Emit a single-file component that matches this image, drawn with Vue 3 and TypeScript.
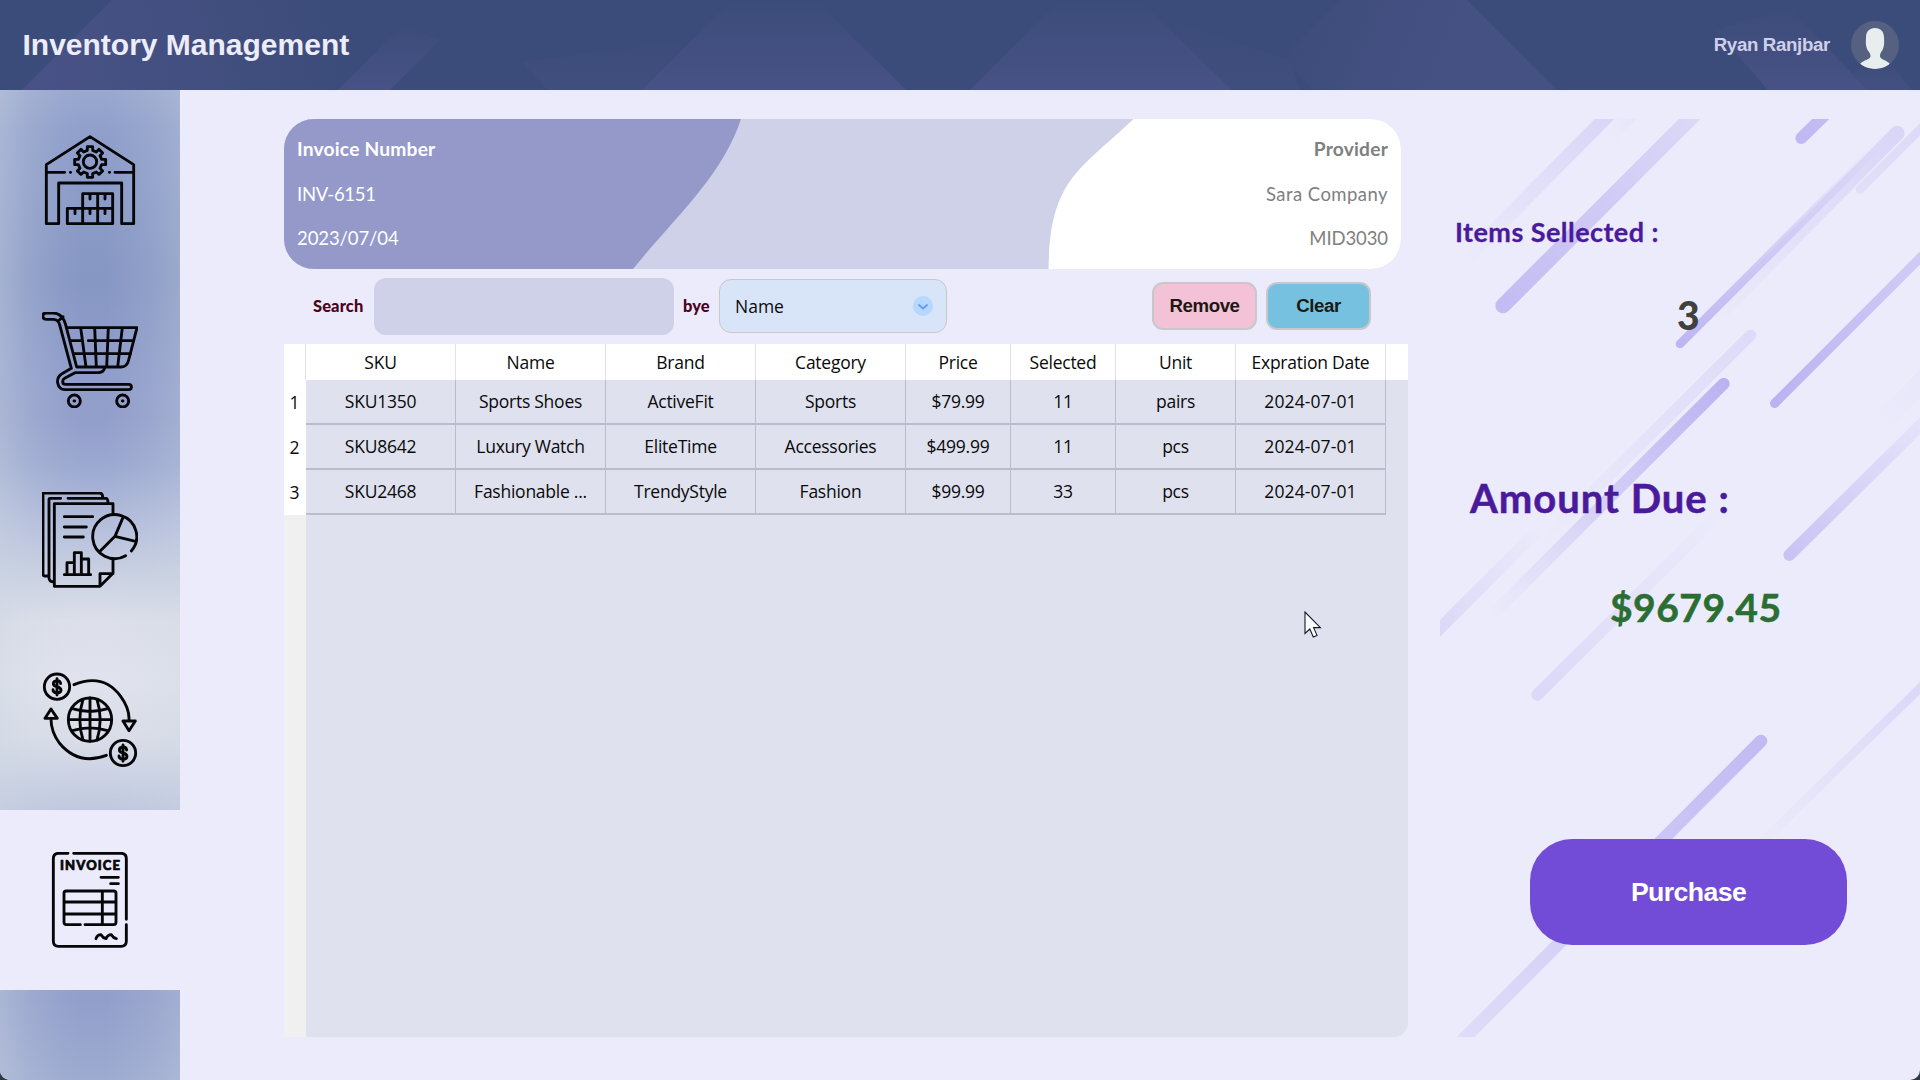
<script setup lang="ts">
interface Item {
  sku: string
  name: string
  maker: string
  category: string
  price: string
  selected: number
  unit: string
  expires: string
}

interface Streak {
  x1: number
  y1: number
  x2: number
  y2: number
  width: number
  from: number
  to: number
  cap: 'round' | 'butt'
}

const headings: string[] = ['SKU', 'Name', 'Brand', 'Category', 'Price', 'Selected', 'Unit', 'Expration Date']

const items: Item[] = [
  { sku: 'SKU1350', name: 'Sports Shoes', maker: 'ActiveFit', category: 'Sports', price: '$79.99', selected: 11, unit: 'pairs', expires: '2024-07-01' },
  { sku: 'SKU8642', name: 'Luxury Watch', maker: 'EliteTime', category: 'Accessories', price: '$499.99', selected: 11, unit: 'pcs', expires: '2024-07-01' },
  { sku: 'SKU2468', name: 'Fashionable ...', maker: 'TrendyStyle', category: 'Fashion', price: '$99.99', selected: 33, unit: 'pcs', expires: '2024-07-01' },
]

// Decorative diagonal streaks; from/to are the opacities at each end.
const streaks: Streak[] = [
  { x1: 100, y1: 485, x2: 550, y2: 30, width: 42, from: 0, to: 0.21, cap: 'butt' },
  { x1: 525, y1: 125, x2: 620, y2: 30, width: 40, from: 0, to: 0.05, cap: 'butt' },
  { x1: 219, y1: 617, x2: 810, y2: 26, width: 46, from: 0.44, to: 0.17, cap: 'round' },
  { x1: 1114, y1: 114, x2: 1210, y2: 20, width: 36, from: 0.47, to: 0.42, cap: 'round' },
  { x1: 750, y1: 732, x2: 1345, y2: 137, width: 26, from: 0.5, to: 0, cap: 'round' },
  { x1: 1402, y1: 99, x2: 830, y2: 680, width: 44, from: 0.2, to: 0, cap: 'round' },
  { x1: 1290, y1: 268, x2: 1500, y2: 58, width: 26, from: 0.12, to: 0.16, cap: 'round' },
  { x1: 1034, y1: 910, x2: 1500, y2: 444, width: 28, from: 0.52, to: 0.28, cap: 'round' },
  { x1: 1350, y1: 970, x2: 1500, y2: 822, width: 60, from: 0, to: 0.05, cap: 'butt' },
  { x1: 1078, y1: 1365, x2: 1500, y2: 948, width: 36, from: 0.37, to: 0.06, cap: 'round' },
  { x1: 962, y1: 706, x2: 320, y2: 1343, width: 34, from: 0.15, to: 0, cap: 'round' },
  { x1: 881, y1: 851, x2: 180, y2: 1551, width: 36, from: 0.52, to: 0, cap: 'round' },
  { x1: 322, y1: 1784, x2: 880, y2: 1230, width: 36, from: 0.17, to: 0, cap: 'round' },
  { x1: 0, y1: 1615, x2: 340, y2: 1275, width: 36, from: 0.19, to: 0, cap: 'butt' },
  { x1: 993, y1: 1923, x2: 80, y2: 2838, width: 38, from: 0.45, to: 0.13, cap: 'round' },
  { x1: 1500, y1: 1735, x2: 960, y2: 2262, width: 26, from: 0.19, to: 0, cap: 'butt' },
]
</script>

<template>
  <div class="window">
    <header class="topbar">
      <svg class="facets" viewBox="0 0 1920 90" preserveAspectRatio="none">
        <defs>
          <linearGradient id="facet" x1="0" y1="0" x2="0" y2="1">
            <stop offset="0" stop-color="#5a5a96" stop-opacity="0" />
            <stop offset="0.5" stop-color="#5a5a96" stop-opacity="0.2" />
            <stop offset="1" stop-color="#5a5a96" stop-opacity="0.4" />
          </linearGradient>
          <linearGradient id="facetLeft" x1="60" y1="90" x2="330" y2="10" gradientUnits="userSpaceOnUse">
            <stop offset="0" stop-color="#5a5a96" stop-opacity="0.4" />
            <stop offset="1" stop-color="#5a5a96" stop-opacity="0" />
          </linearGradient>
          <linearGradient id="facetRight" x1="1290" y1="0" x2="1440" y2="60" gradientUnits="userSpaceOnUse">
            <stop offset="0" stop-color="#5a5a96" stop-opacity="0" />
            <stop offset="1" stop-color="#5a5a96" stop-opacity="0.32" />
          </linearGradient>
        </defs>
        <polygon points="22,90 112,0 420,0 340,90" fill="url(#facetLeft)" />
        <polygon points="338,90 402,26 440,40 390,90" fill="url(#facet)" />
        <polygon points="548,90 522,62 690,40 642,90" fill="url(#facet)" opacity="0.4" />
        <polygon points="642,90 732,0 815,0 906,90" fill="url(#facet)" />
        <polygon points="970,90 1060,0 1140,0 1232,90" fill="url(#facet)" />
        <polygon points="1232,90 1160,18 1290,60 1300,90" fill="url(#facet)" opacity="0.3" />
        <polygon points="1312,90 1284,56 1340,0 1467,0 1557,90" fill="url(#facetRight)" />
        <polygon points="1768,90 1716,30 1790,8 1867,90" fill="url(#facet)" />
        <polygon points="1867,90 1853,74 1880,50 1912,90" fill="url(#facet)" opacity="0.6" />
      </svg>
      <h1 class="brand">Inventory Management</h1>
      <div class="account">
        <span class="account-name">Ryan Ranjbar</span>
        <svg class="avatar" viewBox="0 0 48 48">
          <defs><clipPath id="round"><circle cx="24" cy="24" r="24" /></clipPath></defs>
          <circle cx="24" cy="24" r="24" fill="#566080" />
          <path clip-path="url(#round)" fill="#e7eeed" d="M24 7C29.500 7 33 10.500 33 16.500C33.300 21 33.500 25 31.500 29C29.500 31.500 29 33 29 35.500C30 39 35 38.500 39 43C35 47 29 48 24 48C19 48 13 47 9 43C13 38.500 18.500 39 19.500 35.500C19.500 33 18.500 31.500 16.500 29C14.500 25 14.700 21 15 16.500C15 10.500 18.500 7 24 7Z" />
        </svg>
      </div>
    </header>

    <div class="body">
      <nav class="sidebar">
        <a class="nav-item">
          <svg class="icon" viewBox="126 126 288 288">
            <path d="M139 224L270 140L401 224V401H365V279H176V401H139ZM139 247H194M345 247H401M202 401V355H248V311H338V401ZM248 355H338M248 355V401M293 311V401M270 311V327M315 311V327M225 355V371M270 355V371M315 355V371M211 247H212M328 247H329" />
            <circle cx="270" cy="215" r="20" />
            <path d="M262 170H278V181L289 186L297 178L308 189L300 197L305 208H317V224H305L300 235L308 243L297 253L289 246L278 251V262H262V251L251 246L243 253L232 243L240 235L235 224H224V208H235L240 197L232 189L243 178L251 186L262 181Z" />
          </svg>
        </a>
        <a class="nav-item">
          <svg class="icon" viewBox="126 666 288 288">
            <path d="M204 713H411L386 810Q381 831 364 831H230L196 701Q187 669 158 669H139C125 669 125 688 139 688H160Q174 689 178 701L214 835L186 851C164 864 171 899 195 899H386C397 899 397 883 386 883H196C186 883 186 869 194 865L225 848H296Q312 846 314 833M178 690L189 680M211 752H247M265 752H401M220 791H392M242 713L258 831M284 713L289 831M325 713L320 831M367 713L353 831" />
            <circle cx="223" cy="933" r="18" /><circle cx="368" cy="933" r="18" />
            <path d="M222 933H224M367 933H369" />
          </svg>
        </a>
        <a class="nav-item">
          <svg class="icon" viewBox="126 126 288 288">
            <path d="M339 190V161H163V409H300L339 370V326M300 409V371H339M163 395Q147 397 147 383V147Q147 145 150 145H182M204 145H318Q324 146 324 158M147 378H134Q129 378 129 372V129H300Q308 130 308 142M193 200H278M193 231H259M193 261H250M193 374H272M201 374V338H223M223 374V308H244V374M244 327H266V374" />
            <path d="M377 317A66 66 0 1 1 394 303M370 200L345 259L407 274M345 259L300 304" />
          </svg>
        </a>
        <a class="nav-item">
          <svg class="icon" viewBox="126 666 288 288">
            <circle cx="171" cy="710" r="38" /><circle cx="369" cy="909" r="38" /><circle cx="270" cy="809" r="65" />
            <path d="M270 744V874M205 809H335M217 776Q270 793 323 776M217 842Q270 825 323 842M249 748Q230 809 249 870M291 748Q310 809 291 870M222 704Q310 668 362 739Q389 776 387 810M369 813H406L387 842ZM319 916Q235 948 178 879Q153 845 153 807M135 805H172L153 777Z" />
            <path d="M182 701Q181 692 171 692Q160 693 160 701Q160 708 171 710Q183 713 183 721Q182 729 171 729Q159 728 159 719M171 686V735M380 900Q379 891 369 891Q358 892 358 900Q358 907 369 909Q381 912 381 920Q380 928 369 928Q357 927 357 918M369 885V934" />
          </svg>
        </a>
        <a class="nav-item active">
          <svg class="icon" viewBox="126 156 288 288">
            <path d="M204 160H176Q160 160 160 176V423Q160 439 176 439H363Q379 439 379 423V374M379 358V176Q379 160 363 160H221M303 232H355M332 251H355M241 374H199Q192 374 192 367V280Q192 273 199 273H341Q348 273 348 280V367Q348 374 341 374H255M192 306H348M192 342H348M307 273V374M288 416Q292 404 303 404Q309 414 318 416Q323 404 334 404Q340 414 349 416" />
            <text x="180" y="209" textLength="180">INVOICE</text>
          </svg>
        </a>
      </nav>

      <main class="content">
        <section class="invoice">
          <svg class="waves" viewBox="0 0 1117 150">
            <path d="M0 0H457C438 57 394 95 349 150H0Z" fill="#9499ca" />
            <path d="M849.500 0H1117V150H764.500C766 60 795 52 849.500 0Z" fill="#ffffff" />
          </svg>
          <div class="invoice-side">
            <strong>Invoice Number</strong>
            <span class="number">INV-6151</span>
            <span class="date">2023/07/04</span>
          </div>
          <div class="invoice-side provider">
            <strong>Provider</strong>
            <span class="company">Sara Company</span>
            <span class="date">MID3030</span>
          </div>
        </section>

        <div class="toolbar">
          <label class="label search-label">Search</label>
          <input class="search" type="text" />
          <label class="label by-label">bye</label>
          <div class="select">
            <span>Name</span>
            <svg viewBox="0 0 20 20">
              <circle cx="10" cy="10" r="10" fill="#b7d7ff" />
              <path d="M6 9L10 12.500L14 9" fill="none" stroke="#5f9ff0" stroke-width="1.800" stroke-linecap="round" />
            </svg>
          </div>
          <button class="action remove">Remove</button>
          <button class="action clear">Clear</button>
        </div>

        <div class="grid">
          <div class="grid-row grid-head">
            <div class="row-no"></div>
            <div v-for="heading in headings" :key="heading" class="cell">{{ heading }}</div>
          </div>
          <div v-for="(item, i) in items" :key="item.sku" class="grid-row grid-line">
            <div class="row-no">{{ i + 1 }}</div>
            <div v-for="(value, key) in item" :key="key" :class="['cell', 'col-' + key]">{{ value }}</div>
          </div>
          <div class="gutter"></div>
        </div>
      </main>

      <aside class="summary">
        <svg class="streaks" viewBox="30 57 1440 2754">
          <defs>
            <linearGradient v-for="(s, i) in streaks" :id="'streak' + i" :key="i" gradientUnits="userSpaceOnUse" :x1="s.x1" :y1="s.y1" :x2="s.x2" :y2="s.y2">
              <stop offset="0" stop-color="#8d80e8" :stop-opacity="s.from" />
              <stop offset="1" stop-color="#8d80e8" :stop-opacity="s.to" />
            </linearGradient>
          </defs>
          <line v-for="(s, i) in streaks" :key="i" :x1="s.x1" :y1="s.y1" :x2="s.x2" :y2="s.y2" :stroke="'url(#streak' + i + ')'" :stroke-width="s.width" :stroke-linecap="s.cap" />
        </svg>
        <h2 class="items-label">Items Sellected :</h2>
        <p class="items-count">3</p>
        <h2 class="due-label">Amount Due :</h2>
        <p class="due">$9679.45</p>
        <button class="purchase">Purchase</button>
      </aside>
    </div>

    <svg class="pointer" viewBox="0 0 18 28">
      <path d="M1 1V22.500L5.800 18L9.300 26L13 24.400L9.600 16.600H16.400Z" fill="#fff" stroke="#15152a" stroke-width="1.100" />
    </svg>
  </div>
</template>

<style>
body {
  margin: 0;
  background: #2d3a40;
}
</style>

<style scoped>
* {
  box-sizing: border-box;
}
.window {
  position: relative;
  width: 1920px;
  height: 1080px;
  display: flex;
  flex-direction: column;
  overflow: hidden;
  background: #ecebfb;
  border-radius: 0 0 10px 10px;
  font-family: Lato, "Liberation Sans", sans-serif;
}
.topbar {
  position: relative;
  flex: none;
  height: 90px;
  display: flex;
  align-items: center;
  justify-content: space-between;
  padding: 0 21px 0 22px;
  background: #3c4c7a;
  font-family: "Liberation Sans", Arial, sans-serif;
}
.facets {
  position: absolute;
  inset: 0;
  width: 100%;
  height: 100%;
}
.brand {
  position: relative;
  margin: 0;
  padding-left: 0.5px;
  font-size: 30px;
  line-height: 34px;
  color: #edecfa;
}
.account {
  position: relative;
  display: flex;
  align-items: center;
  gap: 21px;
}
.account-name {
  font-size: 18.67px;
  letter-spacing: -0.33px;
  font-weight: bold;
  color: #cfd0ea;
}
.avatar {
  width: 48px;
  height: 48px;
}
.body {
  flex: 1;
  display: flex;
}
.sidebar {
  width: 180px;
  flex: none;
  background:
    linear-gradient(90deg, rgba(205, 214, 226, 0.42), rgba(205, 214, 226, 0.2) 16%, rgba(205, 214, 226, 0.05) 34%, rgba(205, 214, 226, 0) 46%, rgba(205, 214, 226, 0) 60%, rgba(205, 214, 226, 0.12) 82%, rgba(205, 214, 226, 0.28)),
    linear-gradient(180deg, #9aa8ce 0, #909fcb 40px, #8c9cc8 100px, #8797c4 190px, #8f9dca 280px, #939fcb 330px, #9ba8d0 375px, #b3bddb 430px, #c7cfe1 480px, #dcdfe9 530px, #e0e3ed 590px, #d9dde8 650px, #c3cbe0 710px, #939fcb 880px, #929fcb 910px, #9dabd0 990px);
}
.nav-item {
  height: 180px;
  display: flex;
  align-items: center;
  justify-content: center;
}
.nav-item.active {
  background: #ecebfb;
}
.icon {
  width: 96px;
  height: 96px;
  fill: none;
  stroke: #060608;
  stroke-width: 8.6;
  stroke-linecap: round;
  stroke-linejoin: round;
}
.icon text {
  font: 900 39px Lato, "Liberation Sans", sans-serif;
  fill: #060608;
  stroke-width: 2;
}
.content {
  width: 1124px;
  margin: 29px 0 0 104px;
  display: flex;
  flex-direction: column;
}
.invoice {
  position: relative;
  width: 1117px;
  height: 150px;
  display: flex;
  justify-content: space-between;
  padding: 0 13px;
  border-radius: 30px;
  overflow: hidden;
  background: #cfd1e8;
}
.waves {
  position: absolute;
  inset: 0;
  width: 1117px;
  height: 150px;
}
.invoice-side {
  position: relative;
  display: flex;
  flex-direction: column;
  gap: 20.5px;
  padding-top: 18px;
  font-size: 18.5px;
  line-height: 24px;
  color: #fff;
}
.invoice-side strong {
  font-size: 19.2px;
  letter-spacing: 0.2px;
}
.number {
  letter-spacing: -0.3px;
}
.date {
  letter-spacing: -0.1px;
}
.company {
  letter-spacing: 0.45px;
}
.provider {
  align-items: flex-end;
  color: #808080;
}
.toolbar {
  height: 75px;
  display: flex;
  align-items: center;
  padding: 0 0 2px 29px;
}
.label {
  font-size: 16.5px;
  letter-spacing: 0.1px;
  font-weight: 900;
  color: #4b0420;
}
.search-label {
  width: 61px;
}
.search {
  width: 300px;
  height: 57px;
  margin-top: 2px;
  border: 0;
  border-radius: 12px;
  background: #cfd1e8;
}
.by-label {
  width: 45px;
  padding-left: 9px;
}
.select {
  width: 228px;
  height: 54px;
  display: flex;
  align-items: center;
  justify-content: space-between;
  padding: 0 13px 0 15px;
  border: 1px solid #c8c8c8;
  border-radius: 12px;
  background: #d8e5f8;
  font: 17.5px "Open Sans", "Noto Sans", sans-serif;
  color: #0b0b0b;
}
.select svg {
  width: 20px;
  height: 20px;
}
.action {
  width: 105px;
  height: 48px;
  padding: 0;
  border: 2px solid #c8c8cc;
  border-radius: 11px;
  font: bold 18.67px "Liberation Sans", Arial, sans-serif;
  letter-spacing: -0.4px;
  color: #1a1a12;
}
.remove {
  margin: 0 9px 0 205px;
  background: #f4c2d7;
}
.clear {
  background: #76c1df;
}
.grid {
  height: 693px;
  display: flex;
  flex-direction: column;
  overflow: hidden;
  border-radius: 0 0 14px 0;
  background: #dfe1ee;
  font: 17.5px "Open Sans", "Noto Sans", sans-serif;
  letter-spacing: -0.25px;
  color: #0a0a0a;
}
.grid-row {
  display: grid;
  grid-template-columns: 22px repeat(4, 150px) 105px 105px 120px 150px;
  height: 45px;
}
.grid-head {
  height: 36px;
  background: #fff;
}
.row-no {
  background: #fff;
  display: flex;
  align-items: center;
  justify-content: center;
  padding: 0 1px 2px 0;
}
.cell {
  display: flex;
  align-items: center;
  justify-content: center;
  white-space: nowrap;
  border-right: 1px solid #babccd;
  border-bottom: 2px solid #babccd;
}
.grid-line .cell {
  padding-bottom: 1px;
}
.grid-line .col-expires {
  letter-spacing: 0.1px;
}
.grid-head .cell {
  border-right-color: #e2e2e6;
  border-bottom: 0;
}
.grid-head .row-no {
  border-right: 1px solid #e2e2e6;
}
.gutter {
  flex: 1;
  width: 22px;
  background: #f0f0f0;
}
.summary {
  position: relative;
  width: 480px;
  height: 918px;
  margin: 29px 0 0 32px;
  display: flex;
  flex-direction: column;
  overflow: hidden;
}
.streaks {
  position: absolute;
  inset: 0;
  width: 480px;
  height: 918px;
}
.summary h2,
.summary p {
  position: relative;
  margin: 0;
  white-space: nowrap;
}
.items-label {
  padding: 97px 0 0 15px;
  font-size: 27px;
  line-height: 32px;
  letter-spacing: 0.45px;
  -webkit-text-stroke: 0.3px;
  color: #4a1a9c;
}
.items-count {
  padding: 44px 0 0 237px;
  font-size: 39px;
  line-height: 46px;
  font-weight: 900;
  color: #404040;
}
.due-label {
  padding: 137px 0 0 30px;
  font-size: 40px;
  line-height: 46px;
  letter-spacing: 1px;
  -webkit-text-stroke: 0.5px;
  color: #4a1a9c;
}
.due {
  padding: 63px 0 0 170px;
  font-size: 39px;
  line-height: 46px;
  letter-spacing: 0.5px;
  font-weight: bold;
  -webkit-text-stroke: 0.5px;
  color: #2a6e33;
}
.purchase {
  position: relative;
  width: 317px;
  height: 106px;
  margin: 209px 0 0 90px;
  border: 0;
  border-radius: 42px;
  background: #724cd6;
  color: #fff;
  font: bold 26.67px "Liberation Sans", Arial, sans-serif;
  letter-spacing: -0.6px;
}
.pointer {
  position: absolute;
  left: 1304px;
  top: 611px;
  width: 18px;
  height: 28px;
}
</style>
